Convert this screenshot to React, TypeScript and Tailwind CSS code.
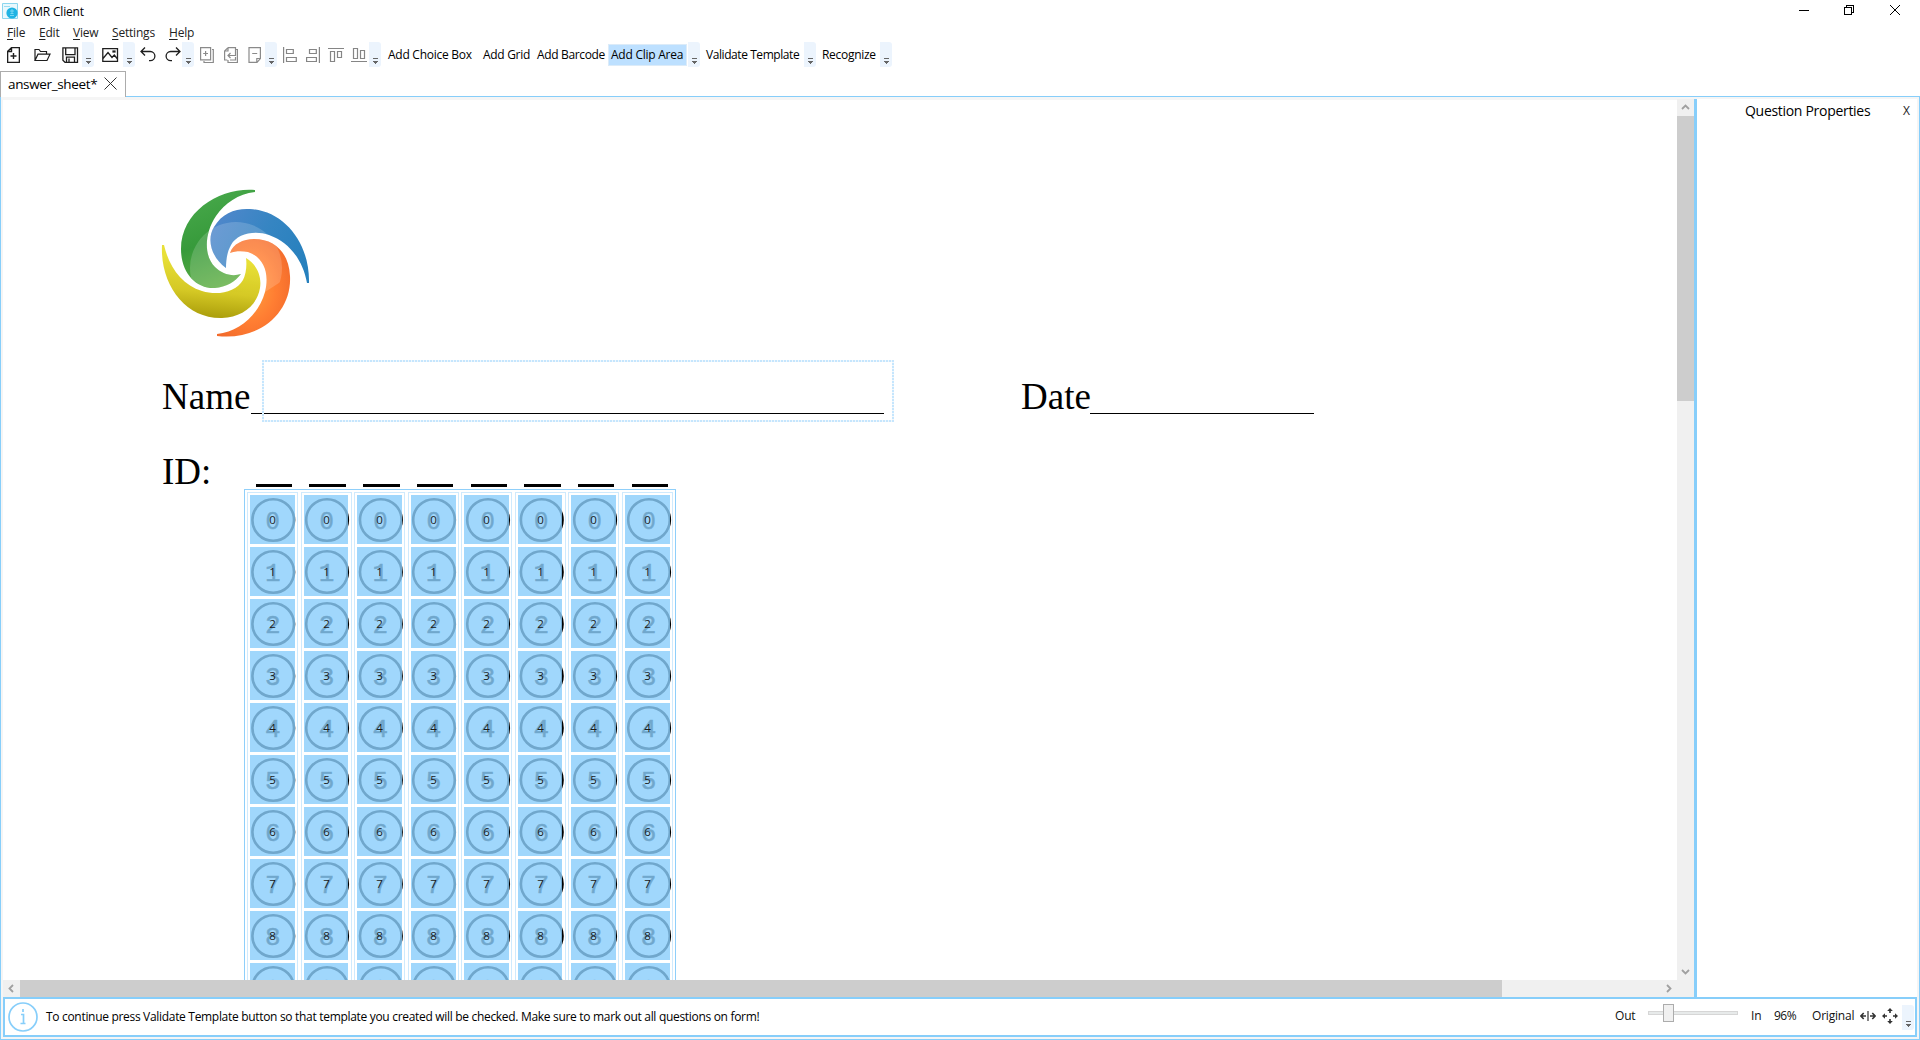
import React from "react";

const COLS = [250, 304, 357, 411, 464, 518, 571, 625];
const COL_W = [45, 44, 45, 45, 45, 44, 45, 45];
const CIRCLE_X = [273.2, 327, 380.8, 434, 488, 541.7, 595, 649];
const DIGITS = ["0", "1", "2", "3", "4", "5", "6", "7", "8", "9"];
const DASHES = [[256, 36], [309, 37], [363, 37], [417, 36], [471, 36], [524, 37], [578, 36], [632, 36]];

function Overflow({ x = "" }: { x?: string }) {
  return (
    <div className={"h-[25px] w-3 shrink-0 rounded-r-[3px] bg-[#ecf4fd] " + x}>
      <svg width="12" height="25" viewBox="0 0 12 25" shapeRendering="crispEdges">
        <path d="M4 16.5h5" stroke="#666" />
        <path d="M3.5 19h6l-3 3z" fill="#666" />
      </svg>
    </div>
  );
}

function Glyph({ children, className = "", w = 16, stroke = "#1e1e1e" }: { children: React.ReactNode; className?: string; w?: number; stroke?: string }) {
  return (
    <svg className={"shrink-0 " + className} width={w} height="18" viewBox={`0 0 ${w} 18`} fill="none" stroke={stroke} strokeWidth="1.2">
      {children}
    </svg>
  );
}

function Label({ text, className }: { text: string; className: string }) {
  return <div className={"shrink-0 whitespace-nowrap " + className}>{text}</div>;
}

function Toolbar() {
  return (
    <div className="flex h-[25px] items-center pl-[7px] text-[12px]">
      <Glyph w={13}>
        <path d="M4.5 1.6h7.9v14.8H.6V5.5zM.6 5.5h3.9V1.6M6.5 7v6M3.5 10h6" strokeWidth="1.4" />
      </Glyph>
      <Glyph w={17} className="ml-[14px]">
        <path d="M1 14.5v-11h4l1.5 2h6v3M1 14.5l3-6.3h12L13 14.5z" />
      </Glyph>
      <Glyph w={17} className="ml-[11px]">
        <path d="M.9 1.9h14.6v14.4H3l-2.1-2zM3.7 2v6.7h9.3V2M4.5 16v-4.8h8V16M7 16v-3.4" strokeWidth="1.3" />
      </Glyph>
      <Overflow x="ml-[3px]" />
      <Glyph w={17} className="ml-2">
        <path d="M.8 2.6h14.7v12.8H.8zM1 12.5l5-6 4 5 2.3-2.5 3.2 4" strokeWidth="1.3" />
        <path d="M11 5h2v1h-2z" />
      </Glyph>
      <Overflow x="ml-1" />
      <Glyph w={17} className="ml-[5px]">
        <path d="M5 1.5 1 5.5l4 4M1 5.5h9.3a4.6 4.6 0 0 1 0 9.2H9" strokeWidth="1.3" />
      </Glyph>
      <Glyph w={17} className="ml-[7px]">
        <path d="m12 1.5 4 4-4 4M16 5.5H6.7a4.6 4.6 0 0 0 0 9.2H8" strokeWidth="1.3" />
      </Glyph>
      <Overflow x="ml-[1px]" />
      <Glyph w={14} className="ml-[6px]" stroke="#8a8a8a">
        <path d="M.6 1.6h10v12.2H.6zM12 3.5h1.3v13H4V15M5.6 5v5M3.2 7.5H8" />
      </Glyph>
      <Glyph w={14} className="ml-[10px]" stroke="#8a8a8a">
        <path d="M4 1.6h7.5v2.7M4 1.6.6 5v9h2.7M4 1.6V5H.6M4 14v2.5h9.4V3.5h-2M11.5 4v5.5H4M6.5 7 4 9.5 6.5 12M11.5 11v3H6" />
      </Glyph>
      <Glyph w={14} className="ml-[10px]" stroke="#8a8a8a">
        <path d="M1 1.6h11.4v11L9 16.4H1zM12.4 12.5H8.8v3.9M4.2 7.5h5" />
      </Glyph>
      <Overflow x="ml-[3px]" />
      <Glyph w={14} className="ml-[6px]" stroke="#858585">
        <path d="M.6 1v16M3.5 3.5h6.8v4H3.5zM3.5 11.5h9.8v4H3.5z" />
      </Glyph>
      <Glyph w={14} className="ml-[9px]" stroke="#858585">
        <path d="M13.4 1v16M3.5 3.5h6.8v4H3.5zM.6 11.5h9.8v4H.6z" />
      </Glyph>
      <Glyph w={16} className="ml-2" stroke="#858585">
        <path d="M0 2.5h16M2.5 5.5h4v10h-4zM9.5 5.5h4v6h-4z" />
      </Glyph>
      <Glyph w={16} className="ml-[7px]" stroke="#858585">
        <path d="M0 15.5h16M2.5 2.5h4v10h-4zM9.5 4.5h4v8h-4z" />
      </Glyph>
      <Overflow x="ml-[2px]" />
      <Label text="Add Choice Box" className="ml-[7px] w-[95px] tracking-[-0.26px]" />
      <Label text="Add Grid" className="w-[54px] tracking-[-0.3px]" />
      <Label text="Add Barcode" className="w-[71px] tracking-[-0.35px]" />
      <div className="flex h-[22px] w-[79px] shrink-0 items-center border border-[#dcebf8] bg-[#bde0ff] pl-[2px]">
        <Label text="Add Clip Area" className="tracking-[-0.25px]" />
      </div>
      <Overflow x="ml-px" />
      <Label text="Validate Template" className="ml-[6px] w-[98px] tracking-[-0.43px]" />
      <Overflow />
      <Label text="Recognize" className="ml-[6px] w-[58px] tracking-[-0.3px]" />
      <Overflow />
    </div>
  );
}

function Logo() {
  return (
    <svg className="absolute left-[155px] top-[89px]" width="152" height="152" viewBox="0 0 152 152">
      <defs>
        <linearGradient id="g" x1="0.3" y1="0" x2="0.6" y2="1">
          <stop offset="0" stopColor="#48a94b" /><stop offset=".5" stopColor="#379a3b" /><stop offset="1" stopColor="#62b044" />
        </linearGradient>
        <linearGradient id="b" x1="0" y1="0.3" x2="1" y2="0.7">
          <stop offset="0" stopColor="#4f87cb" /><stop offset=".5" stopColor="#3585c2" /><stop offset="1" stopColor="#2680bd" />
        </linearGradient>
        <radialGradient id="o" cx=".45" cy=".5" r=".6">
          <stop offset="0" stopColor="#ffa13f" /><stop offset=".6" stopColor="#ff7d32" /><stop offset="1" stopColor="#f36c2c" />
        </radialGradient>
        <linearGradient id="y" x1="0.5" y1="0.2" x2="0.4" y2="1">
          <stop offset="0" stopColor="#e8e038" /><stop offset=".55" stopColor="#d5c925" /><stop offset="1" stopColor="#a99c0a" />
        </linearGradient>
        <clipPath id="inner"><circle cx="77" cy="79" r="46" /></clipPath>
      </defs>
      <g transform="translate(-19 -19)">
        <path fill="url(#g)" d="M115 20C82 17 41 40 41 79c0 24 15 40 34 39 11-1 20-6 26-14-9 3-19 0-26-7C63 85 65 62 76 46c9-13 22-22 39-24z" />
        <path fill="url(#b)" d="M86 98C72 88 66 70 74 57c8-14 22-19 36-18 35 2 60 35 59 74h-2c-4-23-18-41-38-48-15-5-32-1-38 10-4 7-5 15-5 23z" />
        <path fill="url(#o)" d="M90 83c3-9 13-14 24-14 22 0 35 15 36 37 2 36-30 65-73 60v-2c23-2 42-20 48-42 5-20-2-35-17-40-6-1-13-1-18 1z" />
        <path fill="url(#y)" d="M106 88c10 6 16 17 14 30-3 18-18 29-38 30-37 1-62-34-60-73h2c5 22 18 40 38 46 16 5 34 1 41-11 3-6 4-14 3-22z" />
        <g fill="#ffffff" opacity=".17" clipPath="url(#inner)" transform="translate(19 19)">
          <g transform="translate(-19 -19)">
            <path d="M41 79c0 24 15 40 34 39 11-1 20-6 26-14-9 3-19 0-26-7C63 85 65 62 76 46L41 60z" />
            <path d="M86 98C72 88 66 70 74 57c8-14 22-19 36-18l28 30c-15-9-40-7-47 6-4 7-5 15-5 23z" />
            <path d="M90 83c3-9 13-14 24-14 22 0 35 15 36 37l-25 16c5-20-2-35-17-40-6-1-13-1-18 1z" />
          </g>
        </g>
      </g>
    </svg>
  );
}

function AnswerGrid() {
  return (
    <>
      {COLS.map((x, c) => (
        <div key={x}>
          <div className="absolute top-[384px] h-[3px] bg-black" style={{ left: DASHES[c][0] - 4, width: DASHES[c][1] }} />
          <div className="absolute top-[392px] h-[600px] w-[51px] border border-[#cfeafd]" style={{ left: x - 7 }} />
          {DIGITS.map((d, r) => {
            const top = Math.round(395 + r * 52.04);
            return (
              <div key={d}>
                <svg className="absolute" style={{ left: x - 8, top }} width="54" height="50" viewBox={`${x - 4} 0 54 50`}>
                  <circle cx={CIRCLE_X[c]} cy="25" r="20.8" fill="none" stroke="#000" strokeWidth="2.6" />
                  <text x={CIRCLE_X[c] - 0.4} y="33.5" textAnchor="middle" fontFamily={d === "0" ? "Liberation Sans" : "Liberation Mono"} fontSize={d === "0" ? 24 : 26} fill="#000" stroke="#000" strokeWidth="0.5">{d}</text>
                </svg>
                <div className="absolute h-[49px] bg-[#8acefb]/81" style={{ left: x - 4, top, width: COL_W[c] }} />
                <div className="absolute h-4 text-center font-['Open_Sans'] text-[11.5px] leading-4 text-[#1a1a1a]" style={{ left: x - 4, top: top + 17, width: 45 }}>{d}</div>
              </div>
            );
          })}
        </div>
      ))}
      <div className="absolute left-[240px] top-[389px] h-[620px] w-[432px] border border-[#8fcffa]" />
    </>
  );
}

function ClipArea() {
  const h = "absolute inset-x-0 h-[2px] bg-[repeating-linear-gradient(90deg,#c6e6fd_0_2px,#f0f8fe_2px_3px)] ";
  const v = "absolute inset-y-0 w-[2px] bg-[repeating-linear-gradient(180deg,#c6e6fd_0_2px,#f0f8fe_2px_3px)] ";
  return (
    <div className="absolute left-[258px] top-[260px] h-[62px] w-[632px]">
      <div className={h + "top-0"} />
      <div className={h + "bottom-0"} />
      <div className={v + "left-0"} />
      <div className={v + "right-0"} />
    </div>
  );
}

export default function App() {
  return (
    <div className="flex h-[1040px] w-[1920px] flex-col overflow-hidden bg-white font-['Open_Sans',sans-serif] text-[12px] leading-4 text-black">
      <div className="flex h-6 items-start">
        <svg className="ml-[2px] mt-[3px]" width="16" height="16" viewBox="0 0 16 16">
          <path d="M.5.5h15v15H.5z" fill="#e9f8fd" stroke="#8cd6ee" />
          <path d="M2 3.500h6" stroke="#9bdcf1" />
          <circle cx="10" cy="10" r="5.6" fill="#1fb3e3" />
          <path d="M8 12.500h4M8.500 10.500h3M9 7h2v2H9z" stroke="#8be0f7" fill="none" strokeWidth=".8" />
        </svg>
        <div className="ml-[5px] mt-1 tracking-[-0.18px]">OMR Client</div>
        <svg className="ml-auto mr-[19px] mt-1" width="104" height="14" viewBox="0 0 104 14" fill="none" stroke="#000" shapeRendering="crispEdges">
          <path d="M2 6.500h10M47.500 3.500h7v7h-7zM49.500 3V1.500h7v7H55" />
          <path d="m93 1 10 10M103 1 93 11" shapeRendering="auto" />
        </svg>
      </div>
      <div className="flex h-[18px] items-center pl-[7px] text-[#222]">
        {[["F", "ile", "w-8"], ["E", "dit", "w-[34px]"], ["V", "iew", "w-[39px]"], ["S", "ettings", "w-[57px]"], ["H", "elp", "w-10"]].map(([a, b, w]) => (
          <div key={a} className={"tracking-[-0.2px] " + w}>
            <span className="underline underline-offset-2">{a}</span>{b}
          </div>
        ))}
      </div>
      <Toolbar />
      <div className="flex h-[30px] items-end border-b border-[#87cefa]">
        <div className="-mb-px flex h-[26px] w-[126px] items-center border border-b-0 border-[#acacac] bg-white pl-[7px]">
          <div className="-mt-px w-[96px] text-[13.5px] tracking-[-0.35px]">answer_sheet*</div>
          <svg className="-mt-0.5" width="13" height="13" viewBox="0 0 13 13" stroke="#333"><path d="m.5.5 12 12m0-12-12 12" /></svg>
        </div>
      </div>
      <div className="flex h-[943px] flex-col border-x border-b border-[#87cefa] bg-[#f5f5f5] px-[2px] pb-[2px] pt-[2px]">
        <div className="flex h-[898px] shrink-0">
          <div className="flex w-[1691px] flex-col">
            <div className="flex h-[881px]">
              <div className="relative mt-px h-[880px] w-[1674px] overflow-hidden bg-white font-['Liberation_Serif',serif]">
                <div className="absolute left-[1px] top-0 h-full w-full">
                  <Logo />
                  <div className="absolute left-[158px] top-[275px] text-[37px] leading-[44px]">Name</div>
                  <div className="absolute left-[247px] top-[313px] h-px w-[633px] bg-black" />
                  <div className="absolute left-[1017px] top-[275px] text-[37px] leading-[44px]">Date</div>
                  <div className="absolute left-[1086px] top-[313px] h-px w-[224px] bg-black" />
                  <div className="absolute left-[158px] top-[350px] text-[37px] leading-[44px]">ID:</div>
                  <ClipArea />
                  <AnswerGrid />
                </div>
              </div>
              <div className="flex w-[17px] flex-col bg-[#f0f0f0]">
                <svg width="17" height="17" fill="none" stroke="#a0a0a0" strokeWidth="1.8"><path d="m5 10 3.500-3.500L12 10" /></svg>
                <div className="h-[285px] bg-[#cdcdcd]" />
                <svg className="mt-auto" width="17" height="17" fill="none" stroke="#a0a0a0" strokeWidth="1.8"><path d="m5 7 3.500 3.500L12 7" /></svg>
              </div>
            </div>
            <div className="flex h-[17px] bg-[#f0f0f0]">
              <svg width="17" height="17" fill="none" stroke="#a0a0a0" strokeWidth="1.8"><path d="M10 5 6.500 8.500 10 12" /></svg>
              <div className="w-[1482px] bg-[#cdcdcd]" />
              <svg className="ml-auto mr-[17px]" width="17" height="17" fill="none" stroke="#a0a0a0" strokeWidth="1.8"><path d="m7 5 3.500 3.500L7 12" /></svg>
            </div>
          </div>
          <div className="w-[3px] bg-[#87cefa]" />
          <div className="flex h-full w-[220px] items-start bg-white pt-[2px] text-[14px] leading-5">
            <div className="ml-[48px] w-[158px] tracking-[-0.3px]">Question Properties</div>
            <div className="text-[12px] text-[#222]">X</div>
          </div>
        </div>
        <div className="flex h-10 w-[1914px] shrink-0 items-center border-2 border-[#87cefa] bg-white">
          <svg className="ml-[3px]" width="30" height="30" fill="none" stroke="#87cefa">
            <circle cx="15" cy="15" r="14" strokeWidth="1.7" />
            <path d="M15 7v3M13 12.500h2.500V21M12.500 21.500h5" strokeWidth="1.7" />
          </svg>
          <div className="ml-2 tracking-[-0.31px]">To continue press Validate Template button so that template you created will be checked. Make sure to mark out all questions on form!</div>
          <div className="ml-auto flex items-center text-[#111]">
            <div className="-mt-0.5 w-[33px] tracking-[-0.2px]">Out</div>
            <div className="relative h-[18px] w-[90px]">
              <div className="mt-[3px] h-1 border border-[#d6d6d6] bg-[#e7eaea]" />
              <div className="absolute -top-1 left-[15px] h-[18px] w-[11px] border border-[#acacac] bg-[#f0f0f0]" />
            </div>
            <div className="-mt-0.5 ml-[13px] w-[23px]">In</div>
            <div className="-mt-0.5 w-[38px] tracking-[-0.5px]">96%</div>
            <div className="-mt-0.5 w-[48px] tracking-[-0.2px]">Original</div>
            <svg className="-mt-0.5" width="16" height="16" fill="none" stroke="#333" strokeWidth="1.6"><path d="M8 3v10" strokeWidth="1.2" /><path d="M1 8h5M10 8h5M3.700 5 .9 8l2.800 3M12.300 5l2.800 3-2.800 3" /></svg>
            <svg className="-mt-0.5 ml-[6px]" width="16" height="16" fill="#333"><path d="M8 0l2.800 3H8.800V5H7.200V3H5.200zM8 16l2.800-3H8.800V11H7.200v2H5.200zM0 8l3-2.800v2H5v1.600H3v2zM16 8l-3-2.800v2H11v1.600h2v2z" /></svg>
            <Overflow x="ml-[4px] mr-px" />
          </div>
        </div>
      </div>
    </div>
  );
}
